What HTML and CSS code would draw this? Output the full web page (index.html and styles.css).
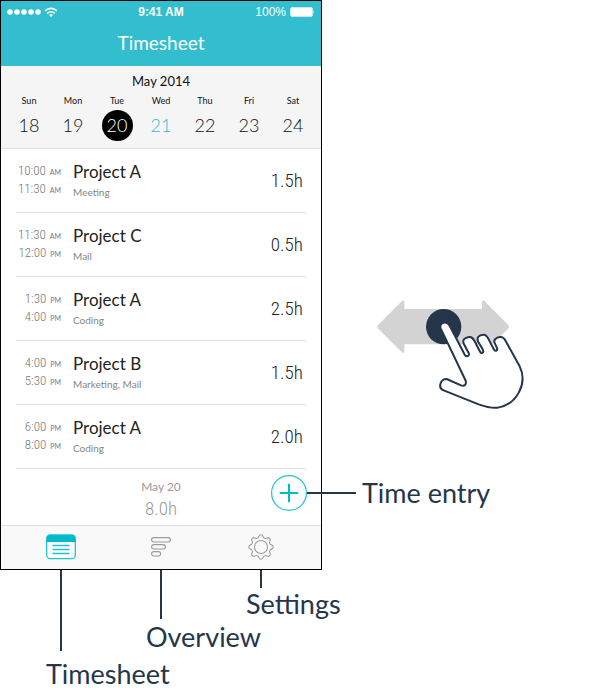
FILE: index.html
```html
<!DOCTYPE html>
<html lang="en">
<head>
<meta charset="utf-8">
<title>Timesheet</title>
<link rel="stylesheet" href="styles.css">
</head>
<body>
<main class="board">
  <section class="phone">
    <header class="top">
      <div class="status">
        <span class="signal">
          <svg width="50" height="11" viewBox="0 0 50 11" aria-hidden="true">
            <g fill="#fff"><circle cx="3" cy="5" r="2.8"/><circle cx="10" cy="5" r="2.8"/><circle cx="17" cy="5" r="2.8"/><circle cx="24" cy="5" r="2.8"/><circle cx="31" cy="5" r="2.8"/></g>
            <path d="M38 3.900Q44 -1 50 3.900M40.200 6.300Q44 3.300 47.800 6.300" fill="none" stroke="#fff" stroke-width="1.6"/>
            <path d="M42 7.900Q44 6.300 46 7.900L44 10Z" fill="#fff"/>
          </svg>
        </span>
        <span class="clock">9:41 AM</span>
        <span class="battery">100%
          <svg width="25" height="10" viewBox="0 0 25 10" aria-hidden="true">
            <rect x=".5" y=".5" width="22" height="9" rx="1.500" fill="none" stroke="#fff" stroke-opacity=".7"/>
            <rect x="1" y="1" width="21" height="8" rx="1" fill="#fff"/>
            <path d="M23.500 3.300Q25 5 23.500 6.700Z" fill="#fff"/>
          </svg>
        </span>
      </div>
      <h1>Timesheet</h1>
    </header>
    <section class="week">
      <h2>May 2014</h2>
      <ol class="days">
        <li><span>Sun</span><b>18</b></li>
        <li><span>Mon</span><b>19</b></li>
        <li class="selected"><span>Tue</span><b>20</b></li>
        <li class="today"><span>Wed</span><b>21</b></li>
        <li><span>Thu</span><b>22</b></li>
        <li><span>Fri</span><b>23</b></li>
        <li><span>Sat</span><b>24</b></li>
      </ol>
    </section>
    <ul class="entries">
      <li>
        <div class="times"><div>10:00 <small>AM</small></div><div>11:30 <small>AM</small></div></div>
        <div class="project"><h3>Project A</h3><p>Meeting</p></div>
        <span class="hours">1.5h</span>
      </li>
      <li>
        <div class="times"><div>11:30 <small>AM</small></div><div>12:00 <small>PM</small></div></div>
        <div class="project"><h3>Project C</h3><p>Mail</p></div>
        <span class="hours">0.5h</span>
      </li>
      <li>
        <div class="times"><div>1:30 <small>PM</small></div><div>4:00 <small>PM</small></div></div>
        <div class="project"><h3>Project A</h3><p>Coding</p></div>
        <span class="hours">2.5h</span>
      </li>
      <li>
        <div class="times"><div>4:00 <small>PM</small></div><div>5:30 <small>PM</small></div></div>
        <div class="project"><h3>Project B</h3><p>Marketing, Mail</p></div>
        <span class="hours">1.5h</span>
      </li>
      <li>
        <div class="times"><div>6:00 <small>PM</small></div><div>8:00 <small>PM</small></div></div>
        <div class="project"><h3>Project A</h3><p>Coding</p></div>
        <span class="hours">2.0h</span>
      </li>
    </ul>
    <div class="summary">
      <div class="total"><span>May 20</span><b>8.0h</b></div>
      <button class="add" type="button" aria-label="Time entry">
        <svg width="36" height="36" viewBox="0 0 36 36" aria-hidden="true"><circle cx="18" cy="18" r="17.400" fill="#fff" stroke="#1cc3d0" stroke-width="1.200"/><path d="M18 9.500V26.500M9.500 18H26.500" stroke="#00bccb" stroke-width="2" stroke-linecap="round"/></svg>
      </button>
    </div>
    <nav class="tabs">
      <button type="button" aria-label="Timesheet">
        <svg width="30" height="26" viewBox="0 0 30 26" aria-hidden="true"><rect x=".7" y="1" width="28.600" height="23.600" rx="3.500" fill="#fff" stroke="#1cc3d0" stroke-width="1.300"/><path d="M.7 8V4.500Q.7 1 4.200 1H25.800Q29.300 1 29.300 4.500V8Z" fill="#00bccb"/><path d="M6.500 11.500H23.500M6.500 15.500H23.500M6.500 19.500H23.500" stroke="#1cc3d0" stroke-width="1.300"/></svg>
      </button>
      <button type="button" aria-label="Overview">
        <svg width="20" height="20" viewBox="0 0 20 20" fill="none" stroke="#9c9c9c" stroke-width="1.100" aria-hidden="true"><rect x=".6" y=".6" width="18.800" height="4.400" rx="2.200"/><rect x=".6" y="7.600" width="13.800" height="4.400" rx="2.200"/><rect x=".6" y="14.600" width="9" height="4.400" rx="2.200"/></svg>
      </button>
      <button type="button" aria-label="Settings">
        <svg width="26" height="26" viewBox="-13 -13 26 26" fill="none" stroke="#9c9c9c" stroke-width="1.100" aria-hidden="true">
          <circle r="6.500"/>
          <path id="tooth" d="M-3.600 -8.700C-2.400 -9.200 -2.300 -10 -2 -10.900Q-1.500 -12.200 0 -12.200Q1.500 -12.200 2 -10.900C2.300 -10 2.400 -9.200 3.600 -8.700"/>
          <use href="#tooth" transform="rotate(45)"/><use href="#tooth" transform="rotate(90)"/><use href="#tooth" transform="rotate(135)"/><use href="#tooth" transform="rotate(180)"/><use href="#tooth" transform="rotate(225)"/><use href="#tooth" transform="rotate(270)"/><use href="#tooth" transform="rotate(315)"/>
        </svg>
      </button>
    </nav>
  </section>
  <aside class="side">
    <svg class="gesture" width="160" height="125" viewBox="0 0 480 375" role="img" aria-label="Swipe left or right">
      <path d="M25 104L96 33Q102 28 103 36V57H336V36Q337 28 343 33L414 104Q420 110 414 116L343 187Q337 192 336 184V163H103V184Q102 192 96 187L25 116Q19 110 25 104Z" fill="#d3d3d3"/>
      <circle cx="221" cy="110" r="53" fill="#25364b"/>
      <path d="M212 115C206 98 230 90 239 107L282 190C288 204 300 199 296 189L282 163C276 149 284 143 297 141C306 140 309 145 314 154L329 183C334 194 343 189 338 178L325 156C318 141 328 135 340 134C349 133 352 140 356 148L371 177C376 187 385 181 380 172L375 161C368 149 380 142 390 141C399 140 403 145 407 153L449 229C474 280 440 345 382 353C363 356 343 349 326 343L221 301C203 295 210 267 230 267L273 286C285 290 291 281 286 270Z" fill="#fff" stroke="#25364b" stroke-width="6" stroke-linejoin="round"/>
    </svg>
    <p class="callout-entry">Time entry</p>
  </aside>
  <ul class="callouts">
    <li class="long">Timesheet</li>
    <li class="medium">Overview</li>
    <li class="short">Settings</li>
  </ul>
</main>
</body>
</html>
```
FILE: styles.css
```css
* { box-sizing: border-box; }
body, h1, h2, h3, p, ul, ol { margin: 0; padding: 0; font-weight: 400; }
ul, ol { list-style: none; }
b { font-weight: 400; }
svg { display: block; }
button { border: 0; padding: 0; background: none; }

body {
  background: #fff;
  color: #25364b;
  font-family: Lato, "Open Sans", sans-serif;
}

.board {
  display: grid;
  grid-template-columns: minmax(0, 322px) minmax(0, 1fr);
  overflow: hidden;
}

.phone {
  border: 1px solid #000;
  background: #fff;
  color: #222;
}

.top {
  height: 65px;
  background: #32bece;
  color: #fff;
  text-align: center;
}
.status {
  display: grid;
  grid-template-columns: 1fr auto 1fr;
  align-items: center;
  height: 22px;
  padding: 0 6px;
  font: 12px/22px "Liberation Sans", sans-serif;
}
.clock { font-weight: 700; }
.battery { display: flex; align-items: center; justify-content: flex-end; gap: 4px; }
h1 { font-size: 19px; line-height: 40px; }

.week {
  height: 83px;
  padding: 4px 6px 0;
  border-bottom: 1px solid #e2e2e2;
  background: #f5f5f5;
  text-align: center;
  color: #111;
}
h2 { font-size: 13px; line-height: 22px; }
.days { display: grid; grid-template-columns: repeat(7, 1fr); }
.days li { display: flex; flex-direction: column; align-items: center; }
.days span { font-size: 9px; line-height: 18px; }
.days b { width: 31px; border-radius: 50%; font-size: 18px; font-weight: 300; line-height: 31px; }
.selected b { background: #000; color: #fff; }
.today b { color: #32bece; }

.entries { padding: 0 15px; }
.entries li {
  display: flex;
  height: 64px;
  border-bottom: 1px solid #e2e2e2;
}
.times {
  width: 45px;
  margin-right: 12px;
  padding-top: 13px;
  color: #777;
  font: 300 13px/18px "Liberation Sans Narrow", "Roboto Condensed", sans-serif;
  text-align: right;
}
.times small { margin-left: 1px; font: 7px Lato, sans-serif; }
.project { flex: 1; padding-top: 11px; }
h3 { font-size: 17px; line-height: 24px; }
.project p { color: #858585; font-size: 10px; line-height: 16px; }
.hours {
  padding: 0 3px;
  font: 300 19px/64px "Liberation Sans Narrow", "Roboto Condensed", sans-serif;
}

.summary {
  display: grid;
  grid-template-columns: 1fr auto 1fr;
  height: 56px;
  padding: 6px 14px 0;
}
.total {
  grid-column: 2;
  display: flex;
  flex-direction: column;
  align-items: center;
  color: #9b9b9b;
}
.total span { font-size: 12px; line-height: 24px; }
.total b { font: 300 19px/20px "Liberation Sans Narrow", "Roboto Condensed", sans-serif; }
.add { justify-self: end; align-self: start; }

.tabs {
  display: grid;
  grid-template-columns: repeat(3, 1fr);
  height: 44px;
  padding: 0 10px;
  border-top: 1px solid #e2e2e2;
  background: #f9f9f9;
}
.tabs button { display: flex; align-items: center; justify-content: center; }
.tabs svg { margin-bottom: 2px; }

.side { font-size: 27px; line-height: 32px; }
.gesture { margin: 290px 0 62px 48px; }
.callout-entry {
  position: relative;
  display: flex;
  align-items: center;
  gap: 6px;
  margin-left: -15px;
  white-space: nowrap;
}
.callout-entry::before { content: ""; width: 49px; height: 2px; background: #25364b; }

.callouts {
  grid-column: 1 / -1;
  display: grid;
  grid-template-columns: repeat(3, 100px);
  padding-left: 46px;
  font-size: 27px;
  line-height: 32px;
  white-space: nowrap;
}
.callouts li::before {
  content: "";
  display: block;
  width: 2px;
  margin-left: 14px;
  background: #25364b;
}
.long::before { height: 81px; margin-bottom: 7px; }
.medium::before { height: 49px; margin-bottom: 2px; }
.short::before { height: 18px; }
```
